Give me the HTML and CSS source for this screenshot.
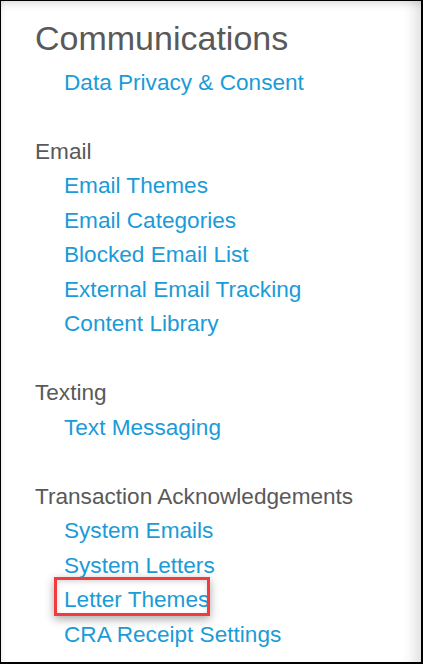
FILE: index.html
```html
<!DOCTYPE html>
<html lang="en">
<head>
<meta charset="utf-8">
<title>Communications</title>
<link rel="stylesheet" href="styles.css">
</head>
<body>
<div class="panel">
  <h1 class="title">Communications</h1>
  <ul class="links first">
    <li><a href="#">Data Privacy &amp; Consent</a></li>
  </ul>

  <section class="group">
    <h2 class="group-title">Email</h2>
    <ul class="links">
      <li><a href="#">Email Themes</a></li>
      <li><a href="#">Email Categories</a></li>
      <li><a href="#">Blocked Email List</a></li>
      <li><a href="#">External Email Tracking</a></li>
      <li><a href="#">Content Library</a></li>
    </ul>
  </section>

  <section class="group">
    <h2 class="group-title">Texting</h2>
    <ul class="links">
      <li><a href="#">Text Messaging</a></li>
    </ul>
  </section>

  <section class="group">
    <h2 class="group-title">Transaction Acknowledgements</h2>
    <ul class="links">
      <li><a href="#">System Emails</a></li>
      <li><a href="#">System Letters</a></li>
      <li><a href="#" class="highlighted">Letter Themes</a></li>
      <li><a href="#">CRA Receipt Settings</a></li>
    </ul>
  </section>
</div>
</body>
</html>
```

FILE: styles.css
```css
html, body {
  margin: 0;
  padding: 0;
  background: #ffffff;
}

body {
  font-family: "Liberation Sans", Arial, sans-serif;
  width: 423px;
  height: 664px;
  overflow: hidden;
}

.panel {
  box-sizing: border-box;
  width: 423px;
  height: 664px;
  border-style: solid;
  border-color: #000;
  border-width: 1px 2px 2px 1px;
  background: #fff;
  padding: 16.5px 0 0 34px;
  box-shadow:
    inset 0 10px 10px -8px rgba(0, 0, 0, 0.16),
    inset -16px 0 14px -10px rgba(0, 0, 0, 0.13),
    inset 5px 0 5px -4px rgba(0, 0, 0, 0.08);
  overflow: hidden;
}

.title {
  margin: 0;
  font-weight: normal;
  font-size: 34px;
  line-height: 40px;
  color: #595959;
}

.links {
  list-style: none;
  margin: 0;
  padding: 0 0 0 29px;
}

.links.first {
  margin-top: 8px;
}

.links li {
  font-size: 22.6px;
  line-height: 34.5px;
}

.links a {
  color: #1b9bd7;
  text-decoration: none;
}

.group {
  margin-top: 34.5px;
}

.group-title {
  margin: 0;
  font-weight: normal;
  font-size: 22.6px;
  line-height: 34.5px;
  color: #595959;
}

.highlighted {
  position: relative;
}

.highlighted::after {
  content: "";
  position: absolute;
  left: -10px;
  top: -10px;
  width: 150px;
  height: 33px;
  border: 3px solid #f23b3f;
  box-shadow:
    0 3px 9px rgba(0, 0, 0, 0.35),
    inset 0 2px 5px rgba(0, 0, 0, 0.15);
  pointer-events: none;
}
```
